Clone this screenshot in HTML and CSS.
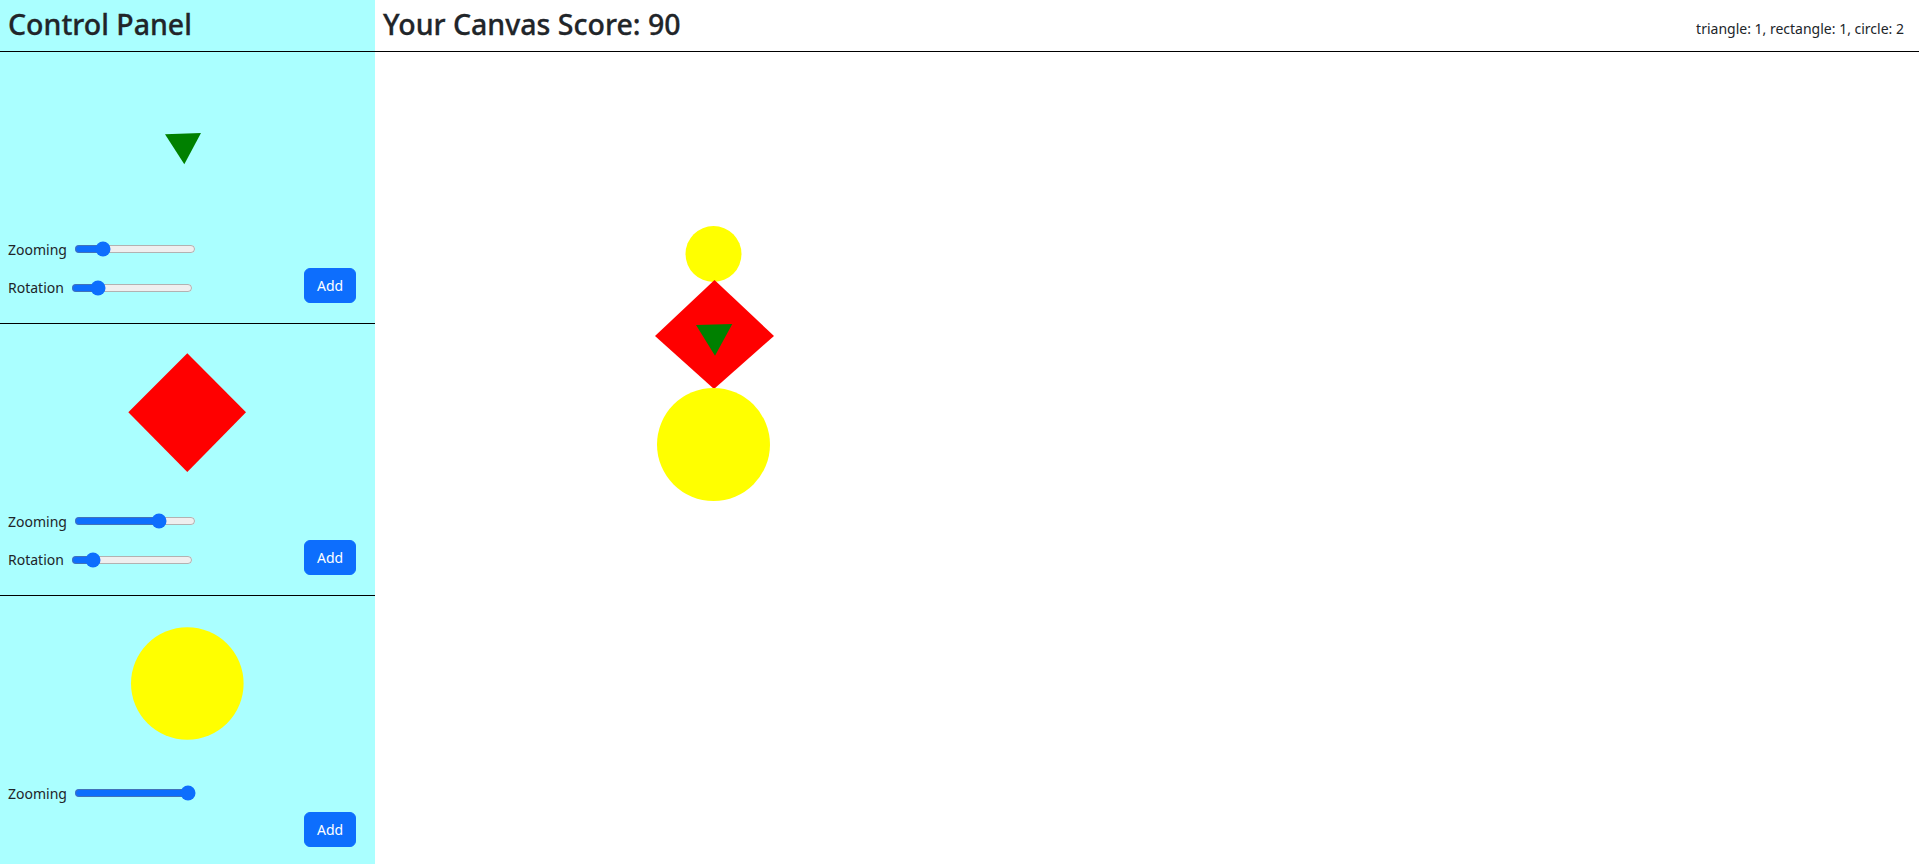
FILE: index.html
```html
<!DOCTYPE html>
<html lang="en">
<head>
<meta charset="utf-8">
<title>Canvas Game</title>
<link rel="stylesheet" href="styles.css">
</head>
<body>
<div class="app">
  <aside class="panel">
    <header class="panel-head"><h3 class="title">Control Panel</h3></header>

    <section class="tool">
      <svg class="preview" width="359" height="182" viewBox="0 0 359 182">
        <polygon points="157,82.3 193,81 176.3,112.3" fill="#008000"/>
      </svg>
      <div class="ctrl-row">
        <label class="ctrl-label">Zooming</label>
        <input class="range" type="range" min="0" max="100" value="20">
      </div>
      <div class="ctrl-row bottom">
        <div class="ctrl">
          <label class="ctrl-label">Rotation</label>
          <input class="range" type="range" min="0" max="100" value="18">
        </div>
        <button class="btn">Add</button>
      </div>
    </section>

    <section class="tool">
      <svg class="preview" width="359" height="182" viewBox="0 0 359 182">
        <polygon points="179.3,29.3 238,88.3 179.3,148 120.3,88.3" fill="#ff0000"/>
      </svg>
      <div class="ctrl-row">
        <label class="ctrl-label">Zooming</label>
        <input class="range" type="range" min="0" max="100" value="73">
      </div>
      <div class="ctrl-row bottom">
        <div class="ctrl">
          <label class="ctrl-label">Rotation</label>
          <input class="range" type="range" min="0" max="100" value="13">
        </div>
        <button class="btn">Add</button>
      </div>
    </section>

    <section class="tool last">
      <svg class="preview" width="359" height="182" viewBox="0 0 359 182">
        <circle cx="179.3" cy="87.5" r="56.3" fill="#ffff00"/>
      </svg>
      <div class="ctrl-row">
        <label class="ctrl-label">Zooming</label>
        <input class="range" type="range" min="0" max="100" value="100">
      </div>
      <div class="ctrl-row bottom">
        <div class="ctrl"></div>
        <button class="btn">Add</button>
      </div>
    </section>
  </aside>

  <main class="stage">
    <header class="stage-head">
      <h3 class="title">Your Canvas Score: 90</h3>
      <span class="counts">triangle: 1, rectangle: 1, circle: 2</span>
    </header>
    <svg class="canvas" width="1544" height="812" viewBox="0 0 1544 812">
      <circle cx="338.5" cy="202" r="28" fill="#ffff00"/>
      <polygon points="339.5,228 399,284 339,337 280,284" fill="#ff0000"/>
      <polygon points="321,273 357.3,272 340,303.7" fill="#008000"/>
      <circle cx="338.5" cy="392.5" r="56.5" fill="#ffff00"/>
    </svg>
  </main>
</div>
</body>
</html>
```

FILE: styles.css
```css
* { box-sizing: border-box; }

html, body {
  margin: 0;
  padding: 0;
  height: 864px;
  overflow: hidden;
  background: #fff;
}

body {
  font-family: "Noto Sans", "Open Sans", sans-serif;
  font-size: 14px;
  color: #212529;
}

.app {
  display: flex;
  height: 864px;
}

.panel {
  width: 375px;
  flex: 0 0 375px;
  background: #aaffff;
  height: 864px;
}

.panel-head,
.stage-head {
  height: 52px;
  border-bottom: 1px solid #000;
  display: flex;
  align-items: center;
  padding: 0 8px;
}

.title {
  margin: 0;
  font-size: 28.5px;
  font-weight: 500;
  line-height: 1.2;
  color: #212529;
  padding-bottom: 2px;
  -webkit-text-stroke: 0.3px #212529;
}

.stage {
  flex: 1;
  min-width: 0;
  display: flex;
  flex-direction: column;
}

.stage-head {
  justify-content: space-between;
  padding-right: 15px;
}

.counts {
  font-size: 14px;
  padding-top: 6px;
}

.canvas {
  display: block;
}

.tool {
  height: 272px;
  border-bottom: 1px solid #000;
  padding: 0 19px 0 8px;
}

.tool.last {
  border-bottom: none;
}

.preview {
  display: block;
}

.ctrl-row {
  display: flex;
  align-items: center;
  height: 32px;
  padding-bottom: 2px;
}

.ctrl-row.bottom {
  margin-top: 2px;
  height: 35px;
  padding-bottom: 0;
  justify-content: space-between;
}

.ctrl {
  display: flex;
  align-items: center;
  padding-top: 4px;
}

.ctrl-label {
  font-size: 14px;
  margin-right: 5px;
}

.range {
  accent-color: #0d6efd;
  width: 122px;
  margin: 0 2px;
}

.btn {
  font-family: "Noto Sans", "Open Sans", sans-serif;
  font-size: 14px;
  line-height: 21px;
  padding: 6px 12px;
  border: 1px solid #0d6efd;
  background: #0d6efd;
  color: #fff;
  border-radius: 6px;
  height: 35px;
  width: 52px;
}
```
